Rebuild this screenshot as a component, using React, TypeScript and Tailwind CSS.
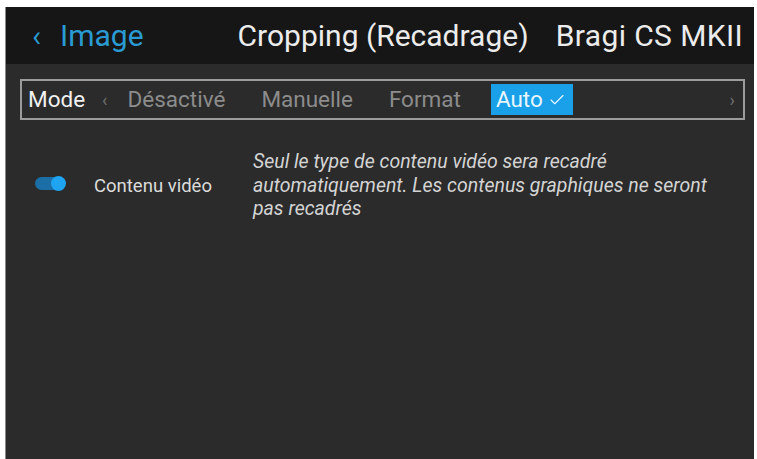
import { Check } from "lucide-react";

export default function App() {
  const modes = ["Désactivé", "Manuelle", "Format"];

  return (
    <div className="h-[459px] w-[757px] bg-white pt-[7px] pl-[5px] pr-[3px] font-['Roboto',sans-serif]">
      <div className="flex h-full flex-col border-l border-[#8a8a8a] bg-[#2b2b2b]">
        {/* Header */}
        <div className="flex h-[57px] items-center bg-[#161616] pl-[26px] text-[30px]">
          <span className="text-[#2a9ad2]">&lsaquo;</span>
          <span className="ml-[19px] text-[#2a9ad2]">Image</span>
          <span className="ml-[94px] text-[#ececec]">Cropping (Recadrage)</span>
          <span className="ml-[27px] tracking-[0.4px] text-[#ececec]">Bragi CS MKII</span>
        </div>

        {/* Mode selector */}
        <div className="mt-[15px] ml-[14px] mr-[9px] flex h-[41px] items-center border-2 border-[#9c9c9c] pl-[6px] pr-[8px] text-[22.5px]">
          <span className="text-[#f0f0f0]">Mode</span>
          <span className="ml-[17px] text-[18px] text-[#6f6f6f]">&lsaquo;</span>
          {modes.map((m, i) => (
            <span
              key={m}
              className={`text-[#8c8c8c] ${i === 0 ? "ml-[20px]" : "ml-[36px]"}`}
            >
              {m}
            </span>
          ))}
          <span className="ml-[30px] flex h-[31px] w-[82px] items-center gap-[5px] bg-[#1aa0e8] pl-[5px] text-[#e8f6ff]">
            Auto
            <Check size={18} strokeWidth={1.5} />
          </span>
          <span className="ml-auto text-[18px] text-[#6f6f6f]">&rsaquo;</span>
        </div>

        {/* Option row */}
        <div className="mt-[30px] flex items-start">
          <div className="ml-[29px] mt-[27px] flex items-center">
            <div className="relative h-[13px] w-[30px] rounded-full bg-[#1b6fa6]">
              <div className="absolute -top-[1px] right-[-1px] h-[15px] w-[15px] rounded-full bg-[#1ea4f0]" />
            </div>
          </div>
          <span className="ml-[29px] mt-[23px] text-[18.5px] text-[#dcdcdc]">Contenu vidéo</span>
          <p className="ml-[41px] w-[470px] text-[19.5px] italic leading-[23.5px] text-[#d4d4d4]">
            Seul le type de contenu vidéo sera recadré automatiquement. Les contenus graphiques ne seront pas recadrés
          </p>
        </div>
      </div>
    </div>
  );
}
